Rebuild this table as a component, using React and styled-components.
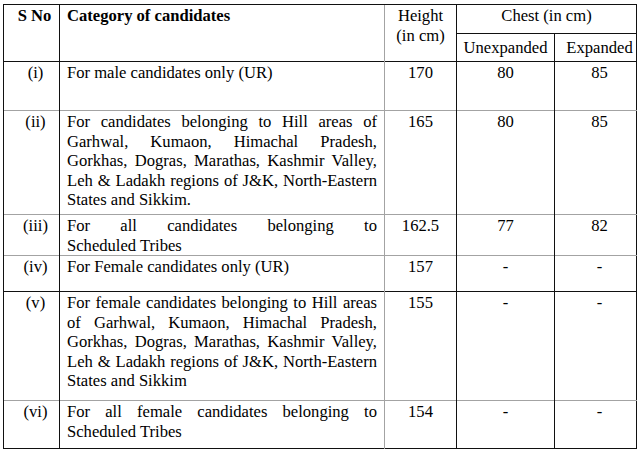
import styled, { createGlobalStyle } from "styled-components";

const SERIF = `"Liberation Serif", "Times New Roman", Times, serif`;

const GlobalStyle = createGlobalStyle`
  html, body {
    margin: 0;
    background: #fff;
  }
  body {
    font-family: ${SERIF};
    color: #000;
  }
`;

const BLACK = "#111";
const GRAY = "#a3a3a3";

const Wrapper = styled.div`
  padding: 4px 0 0 3px;
`;
const Table = styled.table`
  border-collapse: collapse;
  table-layout: fixed;
  width: 634px;
  border-right: 1px solid ${BLACK};
  border-bottom: 1px solid ${BLACK};
  font-family: ${SERIF};
  font-size: 16.6px;
  line-height: 19.5px;
  color: #000;
`;
const Col = styled.col`
  width: ${(p) => p.$w}px;
`;
const Row = styled.tr`
  height: ${(p) => p.$h}px;
`;
const Cell = styled.td`
  font-family: ${SERIF};
  border-top: 1px solid ${(p) => (p.$top === "gray" ? GRAY : BLACK)};
  border-left: 1px solid ${(p) => (p.$left === "gray" ? GRAY : BLACK)};
  vertical-align: ${(p) => (p.$middle ? "middle" : "top")};
  text-align: center;
  padding: 1px 0 0 ${(p) => p.$pl || 0}px;
  font-weight: ${(p) => (p.$bold ? 700 : 400)};
`;
const TextCell = styled(Cell)`
  text-align: left;
  padding: 1px 7px 0 7px;
`;
const Line = styled.div`
  text-align: justify;
  text-align-last: ${(p) => (p.$last ? "left" : "justify")};
`;

const rows = [
  {
    sno: "(i)",
    lines: ["For male candidates only (UR)"],
    height: "170",
    unexp: "80",
    exp: "85",
    h: 49,
    top: "black",
  },
  {
    sno: "(ii)",
    lines: [
      "For candidates belonging to Hill areas of",
      "Garhwal, Kumaon, Himachal Pradesh,",
      "Gorkhas, Dogras, Marathas, Kashmir Valley,",
      "Leh & Ladakh regions of J&K, North-Eastern",
      "States and Sikkim.",
    ],
    height: "165",
    unexp: "80",
    exp: "85",
    h: 104,
    top: "gray",
  },
  {
    sno: "(iii)",
    lines: ["For all candidates belonging to", "Scheduled Tribes"],
    height: "162.5",
    unexp: "77",
    exp: "82",
    h: 40,
    top: "gray",
  },
  {
    sno: "(iv)",
    lines: ["For Female candidates only (UR)"],
    height: "157",
    unexp: "-",
    exp: "-",
    h: 36,
    top: "gray",
  },
  {
    sno: "(v)",
    lines: [
      "For female candidates belonging to Hill areas",
      "of Garhwal, Kumaon, Himachal Pradesh,",
      "Gorkhas, Dogras, Marathas, Kashmir Valley,",
      "Leh & Ladakh regions of J&K, North-Eastern",
      "States and Sikkim",
    ],
    height: "155",
    unexp: "-",
    exp: "-",
    h: 109,
    top: "black",
  },
  {
    sno: "(vi)",
    lines: ["For all female candidates belonging to", "Scheduled Tribes"],
    height: "154",
    unexp: "-",
    exp: "-",
    h: 48,
    top: "gray",
  },
];

export default function App() {
  return (
    <Wrapper>
      <GlobalStyle />
      <Table>
        <colgroup>
          <Col $w={56} />
          <Col $w={325} />
          <Col $w={72} />
          <Col $w={98} />
          <Col $w={82} />
        </colgroup>
        <thead>
          <Row $h={29}>
            <Cell as="th" rowSpan={2} $bold $pl={6}>
              S No
            </Cell>
            <TextCell as="th" rowSpan={2} $bold>
              Category of candidates
            </TextCell>
            <Cell as="th" rowSpan={2} $left="gray">
              Height
              <br />
              (in cm)
            </Cell>
            <Cell as="th" colSpan={2}>
              Chest (in cm)
            </Cell>
          </Row>
          <Row $h={28}>
            <Cell as="th" $middle>
              Unexpanded
            </Cell>
            <Cell as="th" $middle $pl={8}>
              Expanded
            </Cell>
          </Row>
        </thead>
        <tbody>
          {rows.map((r) => (
            <Row key={r.sno} $h={r.h}>
              <Cell $top={r.top} $pl={8}>
                {r.sno}
              </Cell>
              <TextCell $top={r.top}>
                {r.lines.map((l, i) => (
                  <Line key={i} $last={i === r.lines.length - 1}>
                    {l}
                  </Line>
                ))}
              </TextCell>
              <Cell $top={r.top} $left="gray">
                {r.height}
              </Cell>
              <Cell $top={r.top}>{r.unexp}</Cell>
              <Cell $top={r.top} $pl={8}>
                {r.exp}
              </Cell>
            </Row>
          ))}
        </tbody>
      </Table>
    </Wrapper>
  );
}
